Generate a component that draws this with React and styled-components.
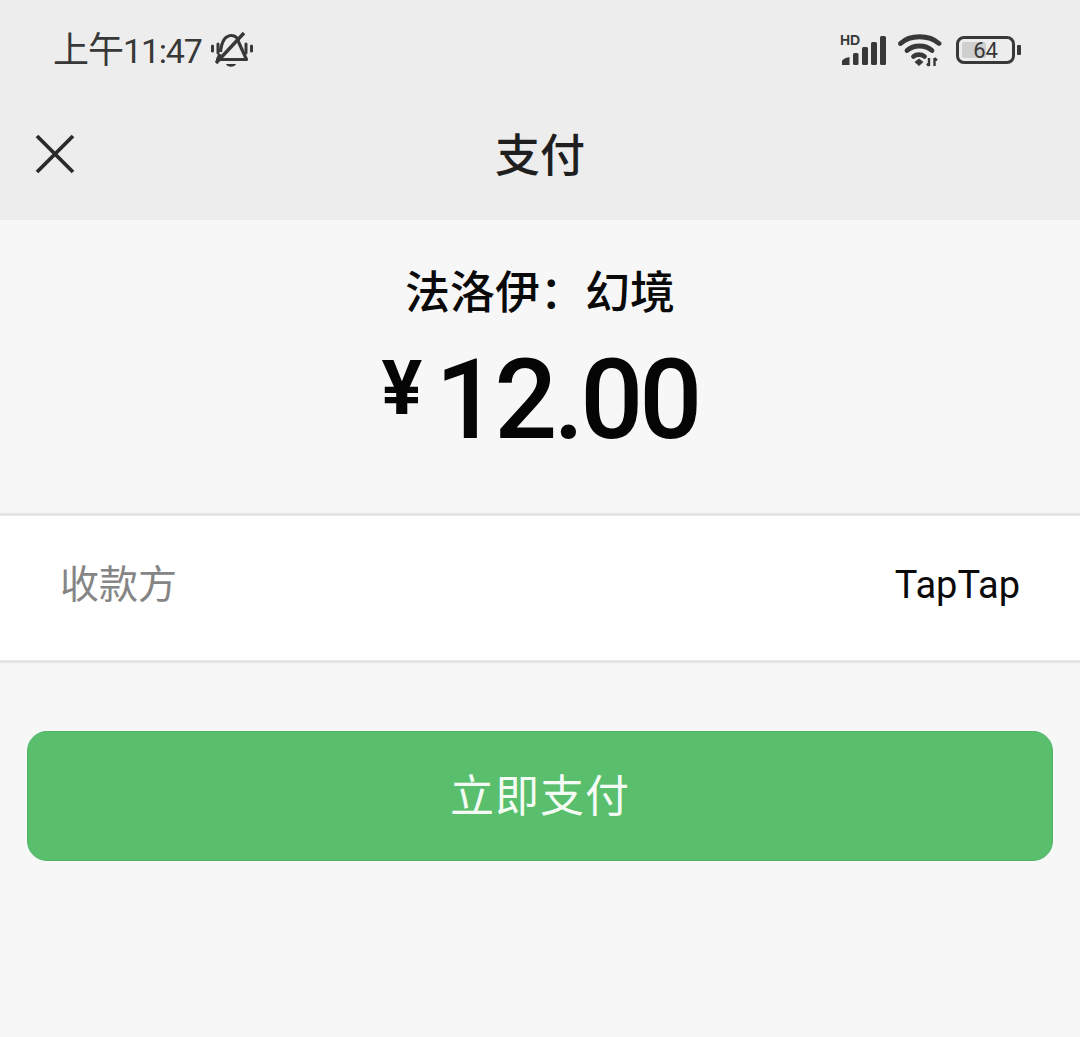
import React from "react";
import styled, { createGlobalStyle } from "styled-components";

const GlobalStyle = createGlobalStyle`
  html, body {
    margin: 0;
    padding: 0;
    background: #f7f7f7;
  }
  * {
    box-sizing: border-box;
  }
`;

const FONT = `"Roboto", "Noto Sans CJK SC", sans-serif`;

const BellOff = () => (
  <svg width="42" height="38" viewBox="0 0 42 38" fill="none" stroke="#383838">
    <path d="M9.500 21C10.500 11 13 5 20 4.500C24 4.300 27 7 28 12L35.500 28.500H6.500L9 23" strokeWidth="3.200" strokeLinejoin="round" />
    <path d="M5 32L33 2" strokeWidth="3.400" />
    <path d="M15 33H25C24 36.500 16 36.500 15 33Z" fill="#383838" strokeWidth="0" />
    <path d="M7 13V22M1.500 15V20M35 13V22M40.500 15V20" strokeWidth="3" strokeLinecap="round" />
  </svg>
);

const SignalBars = () => (
  <svg width="46" height="31" viewBox="0 0 46 31" fill="#383838">
    <path d="M2 30V26.500C2 24.500 5 23 9.500 22V30Z" />
    <rect x="13" y="18" width="5.500" height="12" rx="1.500" />
    <rect x="22" y="12" width="6" height="18" rx="1.500" />
    <rect x="31" y="7" width="6" height="23" rx="1.500" />
    <rect x="40" y="1" width="6" height="29" rx="1.500" />
  </svg>
);

const Wifi = () => (
  <svg width="44" height="34" viewBox="0 0 44 34" fill="none" stroke="#383838" strokeWidth="4.800" strokeLinecap="round">
    <path d="M2.500 10.500C12 1.500 31 1.500 41 10.500" />
    <path d="M9 17.500C15.500 11.500 27.500 11.500 34 17.500" />
    <path d="M15.500 23.500C18.500 21 23.500 21 26.500 23.500" />
    <path d="M21 25.500L25.500 29L21 33L16.500 29Z" fill="#383838" strokeWidth="0" />
    <path d="M31 25V33M29 30.500L31 33M36.500 25V33M36.500 25L39 27.500" strokeWidth="2.400" strokeLinecap="butt" />
  </svg>
);

const CloseIcon = () => (
  <svg width="40" height="40" viewBox="0 0 40 40" fill="none" stroke="#2a2a2a" strokeWidth="3.800">
    <path d="M2 2L38 38M38 2L2 38" />
  </svg>
);

const App = () => {
  return (
    <Page>
      <GlobalStyle />
      <Header>
        <StatusBar>
          <StatusLeft>
            <Clock>
              上午<ClockDigits>11:47</ClockDigits>
            </Clock>
            <BellOff />
          </StatusLeft>
          <StatusRight>
            <Signal>
              <HdLabel>HD</HdLabel>
              <SignalBars />
            </Signal>
            <Wifi />
            <Battery>
              <BatteryBody>
                <BatteryFill $level={52} />
                <BatteryText>64</BatteryText>
              </BatteryBody>
              <BatteryCap />
            </Battery>
          </StatusRight>
        </StatusBar>
        <NavBar>
          <CloseButton>
            <CloseIcon />
          </CloseButton>
          <NavTitle>支付</NavTitle>
        </NavBar>
      </Header>
      <Summary>
        <ProductName>法洛伊：幻境</ProductName>
        <Amount>
          <Currency>¥</Currency>
          <Price>12.00</Price>
        </Amount>
      </Summary>
      <PayeeRow>
        <PayeeLabel>收款方</PayeeLabel>
        <PayeeName>TapTap</PayeeName>
      </PayeeRow>
      <Actions>
        <PayButton>立即支付</PayButton>
      </Actions>
    </Page>
  );
};

export default App;

const Page = styled.div`
  width: 1080px;
  height: 1037px;
  overflow: hidden;
  background: #f7f7f7;
  font-family: ${FONT};
`;

const Header = styled.div`
  height: 220px;
  background: #ededed;
`;

const StatusBar = styled.div`
  height: 100px;
  padding: 0 59px 0 53px;
  display: flex;
  align-items: center;
  justify-content: space-between;
`;

const StatusLeft = styled.div`
  display: flex;
  align-items: center;
  gap: 9px;
`;

const Clock = styled.span`
  padding-bottom: 6px;
  font-size: 36px;
  letter-spacing: -1px;
  color: #383838;
`;

const ClockDigits = styled.span`
  font-size: 34px;
  letter-spacing: -1.200px;
`;

const StatusRight = styled.div`
  display: flex;
  align-items: center;
  gap: 12px;
`;

const Signal = styled.div`
  position: relative;
  width: 46px;
  height: 31px;
`;

const HdLabel = styled.span`
  position: absolute;
  left: 0;
  top: -1px;
  font-family: "Liberation Sans", sans-serif;
  font-size: 14px;
  line-height: 13px;
  font-weight: 700;
  color: #383838;
`;

const Battery = styled.div`
  display: flex;
  align-items: center;
  gap: 2px;
  margin-left: 2px;
`;

const BatteryBody = styled.div`
  position: relative;
  width: 59px;
  height: 28px;
  padding: 3px;
  border: 3px solid #383838;
  border-radius: 8px;
`;

const BatteryFill = styled.div`
  width: ${(props) => props.$level}%;
  height: 100%;
  background: #cfcfcf;
  border-radius: 2px;
`;

const BatteryText = styled.span`
  position: absolute;
  inset: 0;
  display: flex;
  align-items: center;
  justify-content: center;
  font-size: 22px;
  color: #383838;
`;

const BatteryCap = styled.div`
  width: 4px;
  height: 10px;
  background: #383838;
  border-radius: 1px;
`;

const NavBar = styled.div`
  height: 120px;
  padding: 0 35px 12px;
  display: grid;
  grid-template-columns: 1fr auto 1fr;
  align-items: center;
`;

const CloseButton = styled.div`
  width: 40px;
  height: 40px;
`;

const NavTitle = styled.h1`
  margin: 0;
  padding-bottom: 4px;
  font-size: 45px;
  font-weight: 500;
  color: #1f1f1f;
`;

const Summary = styled.div`
  height: 293px;
  padding-top: 44px;
  display: flex;
  flex-direction: column;
  align-items: center;
`;

const ProductName = styled.div`
  font-size: 45px;
  line-height: 60px;
  font-weight: 500;
  color: #0a0a0a;
`;

const Amount = styled.div`
  display: flex;
  align-items: flex-start;
  gap: 13px;
  margin-top: 17px;
  color: #050505;
`;

const Currency = styled.span`
  font-size: 76px;
  line-height: 76px;
  margin-top: 9px;
  font-weight: 700;
`;

const Price = styled.span`
  font-size: 111px;
  line-height: 118px;
  font-weight: 500;
  letter-spacing: -4px;
`;

const PayeeRow = styled.div`
  height: 150px;
  padding: 0 60px 6px;
  display: flex;
  align-items: center;
  justify-content: space-between;
  background: #ffffff;
  border-top: 3px solid #e5e5e5;
  border-bottom: 3px solid #e5e5e5;
`;

const PayeeLabel = styled.span`
  padding-bottom: 8px;
  font-size: 39px;
  color: #858585;
`;

const PayeeName = styled.span`
  font-size: 38px;
  color: #0a0a0a;
`;

const Actions = styled.div`
  padding: 68px 27px 0;
`;

const PayButton = styled.button`
  display: block;
  width: 100%;
  height: 130px;
  padding: 0 0 6px;
  border: 1px solid #52b566;
  border-radius: 20px;
  background: #59bf6d;
  font-family: ${FONT};
  font-size: 44px;
  letter-spacing: 1px;
  color: #f4fbf5;
`;
